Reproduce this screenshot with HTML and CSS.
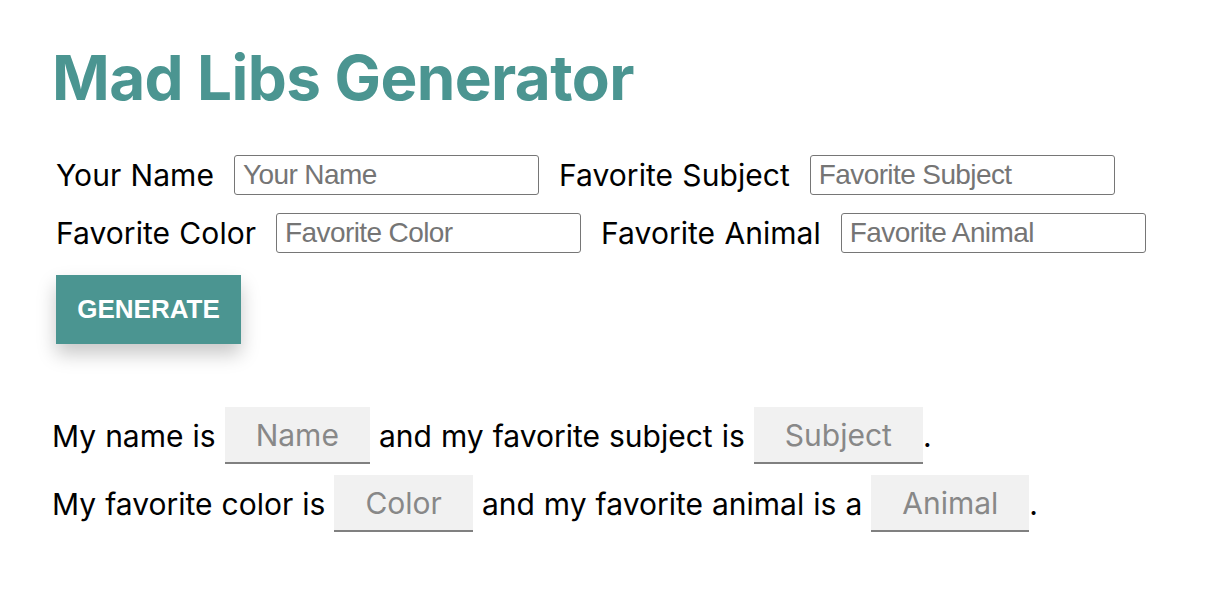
FILE: index.html
```html
<!DOCTYPE html>
<html>
<head>
<meta charset="utf-8">
<link rel="stylesheet" href="styles.css">
</head>
<body>
<main class="app">
  <h1 class="title">Mad Libs Generator</h1>
  <form class="form">
    <div class="fields">
      <label class="field"><span class="label">Your Name</span><input class="input" placeholder="Your Name"></label>
      <label class="field"><span class="label">Favorite Subject</span><input class="input" placeholder="Favorite Subject"></label>
    </div>
    <div class="fields">
      <label class="field"><span class="label">Favorite Color</span><input class="input" placeholder="Favorite Color"></label>
      <label class="field"><span class="label">Favorite Animal</span><input class="input" placeholder="Favorite Animal"></label>
    </div>
    <button type="button" class="btn">GENERATE</button>
  </form>
  <div class="story">
    <p class="line">My name is <span class="blank">Name</span> and my favorite subject is <span class="blank">Subject</span>.</p>
    <p class="line">My favorite color is <span class="blank">Color</span> and my favorite animal is a <span class="blank">Animal</span>.</p>
  </div>
</main>
</body>
</html>
```

FILE: styles.css
```css
* { box-sizing: border-box; }
body {
  margin: 0;
  background: #fff;
  font-family: Inter, "Noto Sans", sans-serif;
  color: #000;
}
.app {
  padding: 40px 52px;
}
.title {
  margin: 0 0 39px 0;
  font-size: 62px;
  line-height: 76px;
  font-weight: 700;
  color: #4b9591;
  letter-spacing: -0.6px;
}
.form {
  padding-left: 4px;
}
.fields {
  display: flex;
  align-items: center;
  gap: 20px;
  margin-bottom: 18px;
}
.field {
  display: flex;
  align-items: center;
  gap: 20px;
}
.label {
  font-size: 30px;
  line-height: 40px;
  letter-spacing: 0.05px;
  word-spacing: 0.8px;
}
.input {
  width: 305px;
  height: 40px;
  border: 1px solid #767676;
  border-radius: 3px;
  padding: 0 8px;
  font-family: "Liberation Sans", Arial, sans-serif;
  font-size: 28px;
  letter-spacing: -0.6px;
  color: #333;
}
.input::placeholder { color: #757575; }
.btn {
  margin-top: 4px;
  width: 185px;
  height: 69px;
  border: none;
  background: #4b9591;
  color: #fff;
  font-family: "Liberation Sans", Arial, sans-serif;
  font-weight: 700;
  font-size: 26px;
  box-shadow: 0 10px 18px rgba(0,0,0,0.22);
  cursor: pointer;
}
.story {
  margin-top: 63px;
}
.line {
  margin: 0 0 10px 0;
  font-size: 30px;
  line-height: 58px;
  height: 58px;
  word-spacing: 0.6px;
}
.blank {
  display: inline-block;
  height: 57px;
  padding: 0 31px;
  background: #f1f1f1;
  border-bottom: 2px solid #808080;
  color: #888;
  line-height: 57px;
  vertical-align: top;
}
```
